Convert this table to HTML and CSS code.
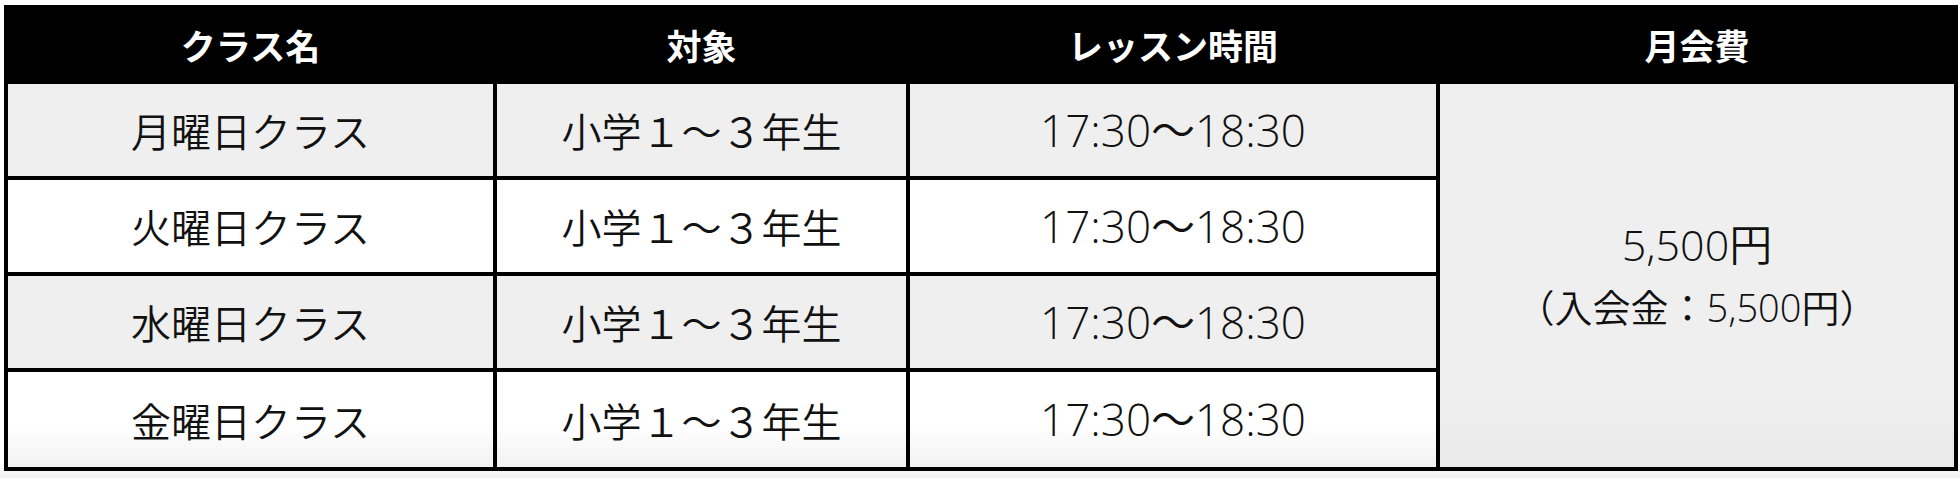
FILE: index.html
```html
<!DOCTYPE html>
<html lang="ja">
<head>
<meta charset="utf-8">
<title>クラス一覧</title>
<link rel="stylesheet" href="styles.css">
</head>
<body>
<div class="wrap">
<table class="schedule">
  <colgroup>
    <col class="c1">
    <col class="c2">
    <col class="c3">
    <col class="c4">
  </colgroup>
  <thead>
    <tr>
      <th>クラス名</th>
      <th>対象</th>
      <th>レッスン時間</th>
      <th>月会費</th>
    </tr>
  </thead>
  <tbody>
    <tr class="odd">
      <td>月曜日クラス</td>
      <td>小学１〜３年生</td>
      <td class="time">17:30〜18:30</td>
      <td class="fee" rowspan="4"><span class="fee-main">5,500円</span><span class="fee-sub">（入会金：5,500円）</span></td>
    </tr>
    <tr class="even">
      <td>火曜日クラス</td>
      <td>小学１〜３年生</td>
      <td class="time">17:30〜18:30</td>
    </tr>
    <tr class="odd">
      <td>水曜日クラス</td>
      <td>小学１〜３年生</td>
      <td class="time">17:30〜18:30</td>
    </tr>
    <tr class="even last">
      <td>金曜日クラス</td>
      <td>小学１〜３年生</td>
      <td class="time">17:30〜18:30</td>
    </tr>
  </tbody>
</table>
</div>
</body>
</html>
```

FILE: styles.css
```css
html, body {
  margin: 0;
  padding: 0;
  background: #ffffff;
}
body {
  font-family: "Noto Sans CJK JP", "Noto Sans", sans-serif;
  color: #111111;
}
.wrap {
  padding: 5px 0 0 4px;
  background: linear-gradient(to bottom, #ffffff 0, #ffffff 460px, #f1f1f1 478px);
  height: 473px;
}
.schedule {
  border-collapse: collapse;
  table-layout: fixed;
  width: 1950px;
  border: 4px solid #000000;
}
.c1 { width: 489px; }
.c2 { width: 413px; }
.c3 { width: 530px; }
.c4 { width: 518px; }

.schedule th {
  background: #000000;
  color: #ffffff;
  font-weight: 700;
  font-size: 35px;
  height: 71px;
  padding: 0;
  text-align: center;
  vertical-align: middle;
  border: 4px solid #000000;
}
.schedule td {
  border: 4px solid #000000;
  font-size: 40px;
  font-weight: 350;
  text-align: center;
  vertical-align: middle;
  padding: 0;
  height: 92px;
  line-height: 1.2;
}
.schedule td.time {
  font-family: "Open Sans", "Noto Sans CJK JP", sans-serif;
  font-size: 44px;
  font-weight: 350;
  line-height: 1.1;
}
.odd td { background: #efefef; }
.even td { background: #ffffff; }
.last td {
  height: 95px;
  background: linear-gradient(to bottom, #ffffff 55%, #f2f2f2 100%);
}
.schedule td.fee {
  font-family: "Open Sans", "Noto Sans CJK JP", sans-serif;
  font-weight: 350;
  background: linear-gradient(to bottom, #efefef 80%, #e9e9e9 100%);
}
.fee-main, .fee-sub {
  display: block;
  line-height: 62px;
}
.fee-main {
  font-size: 43px;
}
.fee-sub {
  font-size: 38px;
}
```
